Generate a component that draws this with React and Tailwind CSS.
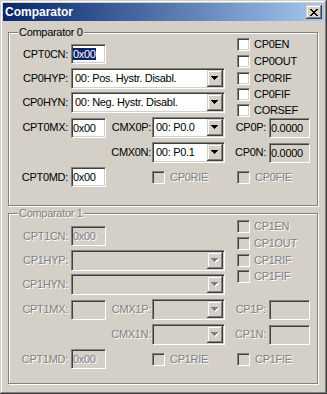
import React from 'react';

// Win2000-style bevels
const sunken =
  'border border-t-[#808080] border-l-[#808080] border-r-white border-b-white shadow-[inset_1px_1px_0_#404040,inset_-1px_-1px_0_#d4d0c8]';
const raised =
  'shadow-[inset_-1px_-1px_0_#404040,inset_1px_1px_0_#d4d0c8,inset_-2px_-2px_0_#808080,inset_2px_2px_0_#fff]';
const dis = 'text-[#808080] [text-shadow:1px_1px_0_#fff]';

const Pixels = ({ rows, fill }) =>
  rows.map(([x, y, w], i) => <rect key={i} x={x} y={y} width={w} height="1" fill={fill} />);

const arrowRows = [
  [0, 0, 7],
  [1, 1, 5],
  [2, 2, 3],
  [3, 3, 1],
];

const closeRows = [
  [0, 0, 2], [6, 0, 2],
  [1, 1, 2], [5, 1, 2],
  [2, 2, 4],
  [3, 3, 2],
  [2, 4, 4],
  [1, 5, 2], [5, 5, 2],
  [0, 6, 2], [6, 6, 2],
];

const Arrow = ({ disabled }) => (
  <svg width="8" height="5" viewBox="0 0 8 5" shapeRendering="crispEdges">
    {disabled && (
      <g transform="translate(1 1)">
        <Pixels rows={arrowRows} fill="#fff" />
      </g>
    )}
    <Pixels rows={arrowRows} fill={disabled ? '#808080' : '#000'} />
  </svg>
);

const Edit = ({ value, disabled, readOnly, selected, w = 'w-[35px]', className = '' }) => (
  <div
    className={`${sunken} ${w} h-[20px] flex items-center pl-[1px] ${
      disabled || readOnly ? 'bg-[#d4d0c8]' : 'bg-white'
    } ${className}`}
  >
    {selected ? (
      <span className="bg-[#0a246a] text-white leading-[12px]">{value}</span>
    ) : (
      <span className={disabled ? dis : ''}>{value}</span>
    )}
  </div>
);

const Combo = ({ value, disabled, w }) => (
  <div className={`${sunken} ${w} h-[21px] p-[1px] flex ${disabled ? 'bg-[#d4d0c8]' : 'bg-white'}`}>
    <div className="flex-1 flex items-center pl-[2px] overflow-hidden whitespace-nowrap">{value}</div>
    <div className={`w-[16px] h-full bg-[#d4d0c8] ${raised} flex items-center justify-center`}>
      <Arrow disabled={disabled} />
    </div>
  </div>
);

const Check = ({ label, disabled, gap = 'gap-[4px]', className = '' }) => (
  <div className={`flex items-center shrink-0 ${gap} ${className}`}>
    <div className={`${sunken} w-[13px] h-[13px] ${disabled ? 'bg-[#d4d0c8]' : 'bg-white'}`} />
    <span className={disabled ? dis : ''}>{label}</span>
  </div>
);

const Label = ({ text, disabled, w, pr = '' }) => (
  <div className={`${w} shrink-0 text-right whitespace-nowrap ${pr} ${disabled ? dis : ''}`}>{text}</div>
);

const Group = ({ n, title, disabled, checks, d, className, offset = 0 }) => (
  <div
    className={`ml-[5px] w-[310px] border border-[#808080] shadow-[inset_1px_1px_0_#fff,1px_1px_0_#fff] flex flex-col ${className}`}
  >
    <div className={`-mt-[7px] -mb-[6px] ml-[9px] self-start bg-[#d4d0c8] px-[1px] h-[13px] ${disabled ? dis : ''}`}>
      {title}
    </div>

    {/* top part: CN / HYP / HYN + flag checkboxes */}
    <div className="flex">
      <div className="flex flex-col w-[216px]">
        <div className={`${offset ? 'mt-[12px]' : 'mt-[11px]'} h-[20px] flex items-center`}>
          <Label text={`CPT${n}CN:`} disabled={disabled} w="w-[59px]" />
          <Edit value={d.cn} disabled={disabled} selected={!disabled} className="ml-[3px]" />
        </div>
        <div className="mt-[4px] h-[21px] flex items-center">
          <Label text={`CP${n}HYP:`} disabled={disabled} w="w-[59px]" />
          <div className="ml-[3px]">
            <Combo value={d.hyp} disabled={disabled} w="w-[154px]" />
          </div>
        </div>
        <div className="mt-[3px] h-[21px] flex items-center">
          <Label text={`CP${n}HYN:`} disabled={disabled} w="w-[59px]" />
          <div className="ml-[3px]">
            <Combo value={d.hyn} disabled={disabled} w="w-[154px]" />
          </div>
        </div>
      </div>
      <div className={`ml-[12px] ${offset ? 'mt-[4px]' : 'mt-[3px]'} flex flex-col h-0`}>
        {checks.map((c, i) => (
          <Check key={c} label={c} disabled={disabled} className={i < 2 ? 'h-[17px]' : 'h-[16px]'} />
        ))}
      </div>
    </div>

    {/* MX / P row */}
    <div className="mt-[4px] h-[21px] flex items-start">
      <div className="h-[21px] flex items-center">
        <Label text={`CPT${n}MX:`} disabled={disabled} w="w-[59px]" />
      </div>
      <Edit value={d.mx} disabled={disabled} className="ml-[3px] mt-[1px]" />
      <div className="h-[21px] flex items-center">
        <Label text={`CMX${n}P:`} disabled={disabled} w="w-[46px]" pr="pr-[1px]" />
      </div>
      <Combo value={d.p} disabled={disabled} w="w-[73px]" />
      <div className="h-[21px] flex items-center">
        <Label text={`CP${n}P:`} disabled={disabled} w="w-[44px]" pr="pr-[3px]" />
      </div>
      <Edit value={d.pv} readOnly w="w-[41px]" className="mt-[1px]" />
    </div>

    {/* N row */}
    <div className="mt-[4px] h-[21px] flex items-start pl-[97px]">
      <div className="h-[21px] flex items-center">
        <Label text={`CMX${n}N:`} disabled={disabled} w="w-[46px]" pr="pr-[1px]" />
      </div>
      <Combo value={d.n} disabled={disabled} w="w-[73px]" />
      <div className="h-[21px] flex items-center">
        <Label text={`CP${n}N:`} disabled={disabled} w="w-[44px]" pr="pr-[3px]" />
      </div>
      <Edit value={d.nv} readOnly w="w-[41px]" className="mt-[1px]" />
    </div>

    {/* MD row */}
    <div className="mt-[4px] h-[20px] flex items-center">
      <Label text={`CPT${n}MD:`} disabled={disabled} w="w-[59px]" />
      <Edit value="0x00" disabled={disabled} className="ml-[3px]" />
      <Check label={`CP${n}RIE`} disabled gap="gap-[5px]" className="ml-[46px] w-[85px]" />
      <Check label={`CP${n}FIE`} disabled gap="gap-[5px]" />
    </div>
  </div>
);

const App = () => {
  return (
    <div className="w-[327px] h-[394px] bg-[#d4d0c8] p-[3px] flex flex-col text-[11px] leading-[13px] tracking-[-0.3px] text-black font-['Liberation_Sans',Arial,sans-serif] shadow-[inset_-1px_-1px_0_#404040,inset_1px_1px_0_#d4d0c8,inset_-2px_-2px_0_#808080,inset_2px_2px_0_#fff]">
      <div className="h-[18px] shrink-0 flex items-center justify-between pl-[2px] pr-[2px] bg-linear-to-r from-[#0a246a] to-[#a6caf0]">
        <span className="text-white font-bold text-[12px] leading-[14px] tracking-normal">Comparator</span>
        <div className={`w-[16px] h-[14px] bg-[#d4d0c8] ${raised} flex items-center justify-center`}>
          <svg width="8" height="7" viewBox="0 0 8 7" shapeRendering="crispEdges">
            <Pixels rows={closeRows} fill="#000" />
          </svg>
        </div>
      </div>

      <Group
        n={0}
        title="Comparator 0"
        className="mt-[11px] h-[174px] shrink-0"
        checks={['CP0EN', 'CP0OUT', 'CP0RIF', 'CP0FIF', 'CORSEF']}
        d={{
          cn: '0x00',
          hyp: '00: Pos. Hystr. Disabl.',
          hyn: '00: Neg. Hystr. Disabl.',
          mx: '0x00',
          p: '00: P0.0',
          n: '00: P0.1',
          pv: '0.0000',
          nv: '0.0000',
        }}
      />

      <Group
        n={1}
        title="Comparator 1"
        disabled
        offset={1}
        className="mt-[7px] h-[171px] shrink-0"
        checks={['CP1EN', 'CP1OUT', 'CP1RIF', 'CP1FIF']}
        d={{ cn: '0x00', hyp: '', hyn: '', mx: '', p: '', n: '', pv: '', nv: '' }}
      />
    </div>
  );
};

export default App;
